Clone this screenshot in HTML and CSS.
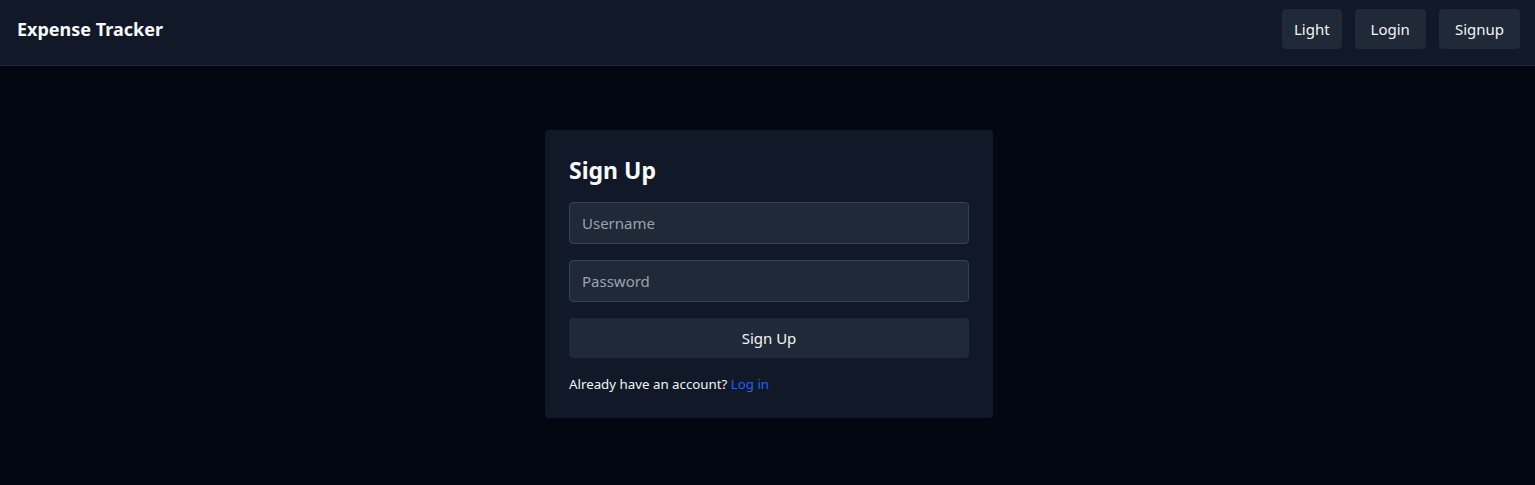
FILE: index.html
```html
<!DOCTYPE html>
<html lang="en">
<head>
<meta charset="utf-8">
<title>Expense Tracker</title>
<link rel="stylesheet" href="styles.css">
</head>
<body>
<header class="topbar">
  <div class="brand">Expense Tracker</div>
  <nav class="nav">
    <button class="nav-btn nav-btn-sm">Light</button>
    <button class="nav-btn">Login</button>
    <button class="nav-btn">Signup</button>
  </nav>
</header>
<main class="main">
  <section class="card">
    <h1 class="card-title">Sign Up</h1>
    <input class="field" type="text" placeholder="Username">
    <input class="field" type="password" placeholder="Password">
    <button class="submit">Sign Up</button>
    <p class="foot">Already have an account? <a class="link" href="#">Log in</a></p>
  </section>
</main>
</body>
</html>
```
FILE: styles.css
```css
* { box-sizing: border-box; }
html, body { margin: 0; padding: 0; }
body {
  background: #030712;
  color: #f3f4f6;
  font-family: "Noto Sans", "Open Sans", sans-serif;
  min-height: 485px;
}
.topbar {
  display: flex;
  justify-content: space-between;
  align-items: center;
  height: 66px;
  padding: 0 15px 8px 17px;
  background: #111827;
  border-bottom: 1px solid #1f2937;
}
.brand {
  font-size: 18px;
  font-weight: 700;
  color: #f9fafb;
  line-height: 28px;
}
.nav { display: flex; gap: 13px; }
.nav-btn {
  font-family: inherit;
  font-size: 15px;
  line-height: 24px;
  height: 40px;
  padding: 0 16px;
  background: #1f2937;
  color: #f3f4f6;
  border: none;
  border-radius: 4px;
}
.nav-btn-sm { padding: 0 12px; }
.main {
  display: flex;
  justify-content: center;
  padding-top: 64px;
  padding-left: 3px;
}
.card {
  width: 448px;
  background: #111827;
  border-radius: 4px;
  padding: 24px;
  display: flex;
  flex-direction: column;
}
.card-title {
  margin: 0 0 16px;
  font-size: 23px;
  line-height: 32px;
  font-weight: 700;
  color: #f9fafb;
}
.field {
  display: block;
  width: 100%;
  height: 42px;
  margin-bottom: 16px;
  padding: 0 12px;
  font-family: inherit;
  font-size: 15px;
  color: #f3f4f6;
  background: #1f2937;
  border: 1px solid #374151;
  border-radius: 4px;
  outline: none;
}
.field::placeholder { color: #9ca3af; }
.submit {
  height: 40px;
  width: 100%;
  font-family: inherit;
  font-size: 15px;
  color: #f3f4f6;
  background: #1f2937;
  border: none;
  border-radius: 4px;
}
.foot {
  margin: 16px 0 0;
  font-size: 13.3px;
  line-height: 20px;
  color: #f3f4f6;
}
.link { color: #2563eb; text-decoration: none; }
```
